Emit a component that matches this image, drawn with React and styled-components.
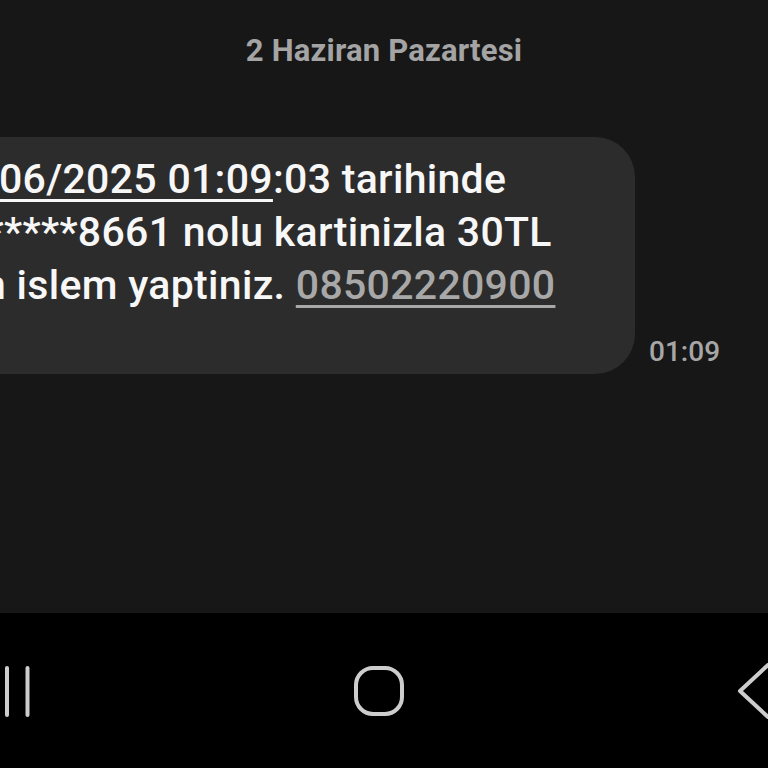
import React from "react";
import styled, { createGlobalStyle } from "styled-components";

const Global = createGlobalStyle`
  html, body { margin: 0; padding: 0; background: #000; overflow: hidden; }
  body { font-family: Roboto, "Noto Sans", "Liberation Sans", sans-serif; }
  * { box-sizing: border-box; }
`;

const Screen = styled.div`
  width: 768px;
  height: 768px;
  display: flex;
  flex-direction: column;
  overflow: hidden;
`;

const Conversation = styled.div`
  height: 613px;
  background: #171717;
  display: flex;
  flex-direction: column;
  padding-top: 30px;
`;

const DateLabel = styled.div`
  text-align: center;
  color: #a4a4a4;
  font-size: 31px;
  font-weight: 700;
  line-height: 42px;
  letter-spacing: 0.2px;
`;

const MessageRow = styled.div`
  display: flex;
  align-items: flex-end;
  gap: 14px;
  margin-top: 65px;
`;

const Bubble = styled.div`
  width: 635px;
  height: 237px;
  background: #2c2c2c;
  border-radius: 0 40px 40px 0;
  padding-top: 16px;
  color: #f7f7f7;
  font-size: 41px;
  font-weight: 500;
  line-height: 53px;
  letter-spacing: 0.3px;
  white-space: nowrap;
  overflow: hidden;
`;

const Line = styled.div`
  margin-left: ${(p) => p.$indent || 0}px;
`;

const Under = styled.span`
  text-decoration: underline;
  text-decoration-thickness: 3px;
  text-underline-offset: 6px;
  color: ${(p) => (p.$muted ? "#a8a8a8" : "inherit")};
`;

const Time = styled.div`
  color: #a6a6a6;
  font-size: 28px;
  font-weight: 500;
  line-height: 30px;
  margin-bottom: 7px;
`;

const NavBar = styled.div`
  height: 155px;
  background: #000;
  display: flex;
  align-items: center;
`;

const NavIcon = styled.svg`
  display: block;
  flex: none;
  margin-left: ${(p) => p.$gap || 0}px;
`;

export default function App() {
  return (
    <Screen>
      <Global />
      <Conversation>
        <DateLabel>2 Haziran Pazartesi</DateLabel>
        <MessageRow>
          <Bubble>
            <Line $indent={-1}>
              <Under>06/2025 01:09</Under>:03 tarihinde
            </Line>
            <Line $indent={-33}>******8661 nolu kartinizla 30TL</Line>
            <Line $indent={-17}>
              n islem yaptiniz. <Under $muted>08502220900</Under>
            </Line>
          </Bubble>
          <Time>01:09</Time>
        </MessageRow>
      </Conversation>
      <NavBar>
        <NavIcon width="32" height="56" viewBox="0 0 32 56">
          <g stroke="#cdcdcd" strokeWidth="4" strokeLinecap="round">
            <line x1="7" y1="5" x2="7" y2="52" />
            <line x1="27.5" y1="5" x2="27.5" y2="52" />
          </g>
        </NavIcon>
        <NavIcon $gap={320} width="54" height="56" viewBox="0 0 54 56">
          <rect x="4" y="5" width="46" height="46" rx="17" fill="none" stroke="#cdcdcd" strokeWidth="4" />
        </NavIcon>
        <NavIcon $gap={330} width="32" height="56" viewBox="0 0 32 56">
          <polyline points="32,2 4,28 32,54" fill="none" stroke="#cdcdcd" strokeWidth="4" strokeLinecap="round" strokeLinejoin="round" />
        </NavIcon>
      </NavBar>
    </Screen>
  );
}
